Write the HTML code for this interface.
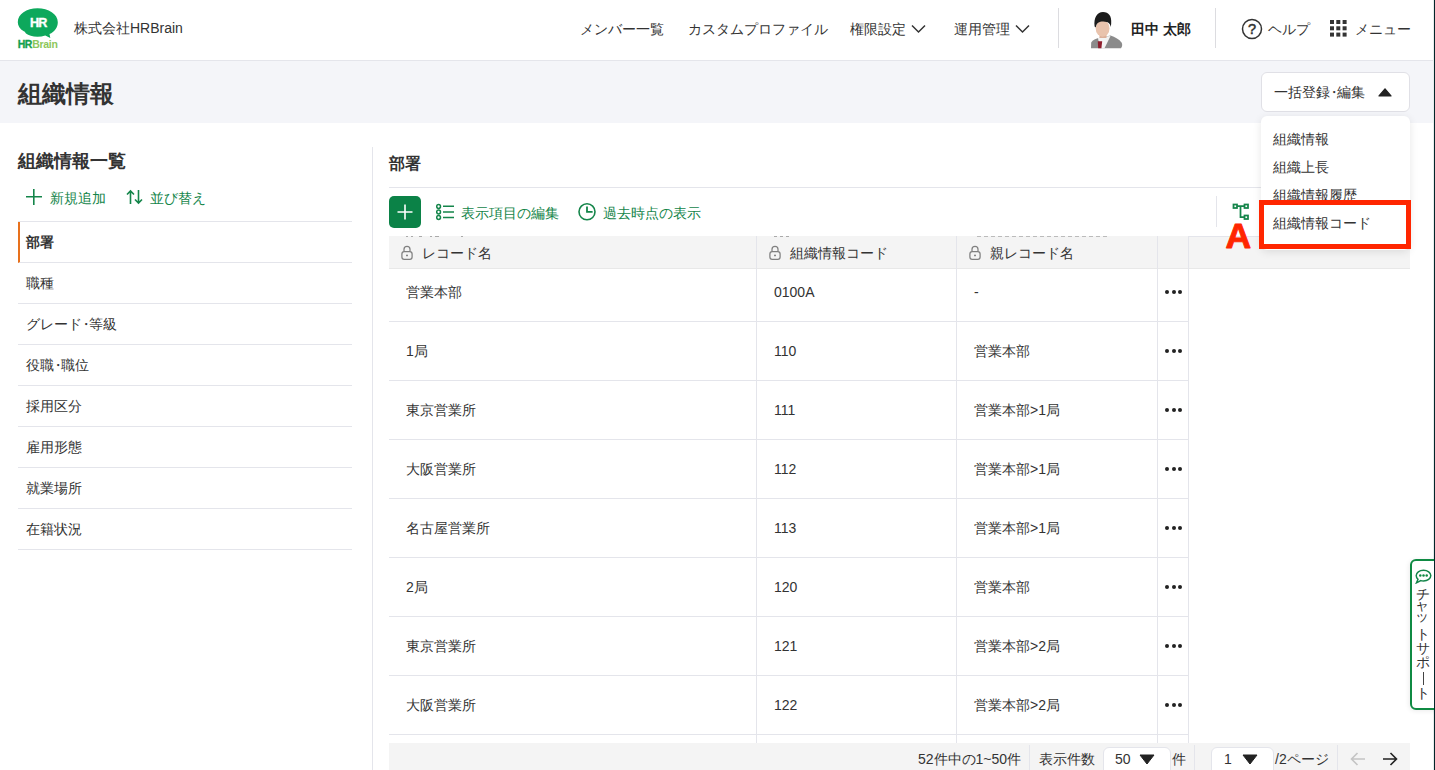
<!DOCTYPE html>
<html lang="ja">
<head>
<meta charset="utf-8">
<style>
*{box-sizing:border-box;margin:0;padding:0}
html,body{width:1435px;height:770px;overflow:hidden;background:#fff;font-family:"Liberation Sans",sans-serif;color:#333;font-size:14px}
.abs{position:absolute}
.t{position:absolute;white-space:nowrap;line-height:1}
#hdr{position:absolute;left:0;top:0;width:1435px;height:61px;background:#fff;border-bottom:1px solid #e4e5eb}
#band{position:absolute;left:0;top:61px;width:1435px;height:62px;background:#f4f5f9}
.vl{position:absolute;width:1px;background:#dcdce0}
.hl{position:absolute;height:1px;background:#e4e5eb}
.green{color:#14854a}
.side-item{position:absolute;left:18px;width:334px;height:41px;border-bottom:1px solid #e4e5eb}
.side-item span{position:absolute;left:8px;top:13px;line-height:14px;font-size:14px;color:#333}
.row{position:absolute;left:389px;width:799px;height:59px;border-bottom:1px solid #e4e5eb}
.cell{position:absolute;font-size:14px;line-height:14px;color:#333;white-space:nowrap}
.dots{position:absolute;left:1165px;width:17px;height:4px}
.dots i{position:absolute;top:0;width:4px;height:4px;border-radius:50%;background:#222}
</style>
</head>
<body>
<!-- header -->
<div id="hdr"></div>
<!-- logo -->
<svg class="abs" style="left:17px;top:7px" width="42" height="43" viewBox="0 0 42 43">
  <path d="M20.5 1.3 C31.5 1.3 40.8 7.2 40.8 15.2 C40.8 20.5 37.5 24.6 32.5 27.1 L33.3 31 L28.3 28.6 C25.8 29.4 23.2 29.8 20.5 29.8 C15.5 29.8 11.3 28.6 9 26.6 C8.2 25.2 7.8 24.8 6.8 24.3 C2.8 22 0.8 18.8 0.8 15.2 C0.8 7.2 9.5 1.3 20.5 1.3 Z" fill="#0da85c"/>
  <text x="21.3" y="20.4" text-anchor="middle" font-family="Liberation Sans" font-weight="bold" font-size="12.6" fill="#fff" stroke="#fff" stroke-width="0.35" letter-spacing="-0.9">HR</text>
  <text x="0.8" y="41" font-family="Liberation Sans" font-weight="bold" font-size="10.5" fill="#14a04e" stroke="#14a04e" stroke-width="0.3" letter-spacing="-0.6">HR</text>
  <text x="15.2" y="41" font-family="Liberation Sans" font-weight="bold" font-size="10.5" fill="#8cc75c" letter-spacing="-0.3">Brain</text>
</svg>
<div class="t" style="left:74px;top:21px;font-size:14px;color:#333">株式会社HRBrain</div>
<!-- nav -->
<div class="t" style="left:580px;top:22px;font-size:14px">メンバー一覧</div>
<div class="t" style="left:688px;top:22px;font-size:14px">カスタムプロファイル</div>
<div class="t" style="left:850px;top:22px;font-size:14px">権限設定</div>
<svg class="abs" style="left:911px;top:24px" width="15" height="10" viewBox="0 0 15 10"><path d="M1 1.5 L7.5 8 L14 1.5" fill="none" stroke="#333" stroke-width="1.5"/></svg>
<div class="t" style="left:954px;top:22px;font-size:14px">運用管理</div>
<svg class="abs" style="left:1015px;top:24px" width="15" height="10" viewBox="0 0 15 10"><path d="M1 1.5 L7.5 8 L14 1.5" fill="none" stroke="#333" stroke-width="1.5"/></svg>
<div class="vl" style="left:1058px;top:8px;height:40px"></div>
<!-- avatar -->
<svg class="abs" style="left:1090px;top:11px" width="34" height="38" viewBox="0 0 34 38">
  <path d="M1 37.2 L1.2 31.5 C2.5 29 6 27.8 9.5 26.8 L20.5 24.5 C25 26 29.5 28.5 31.5 31.5 C32.5 33 32.5 35.5 31 37.2 Z" fill="#8b8b8b"/>
  <path d="M8 27.2 L10 37.2 L14.5 37.2 L20.5 24.9 L16 25.6 L10.5 26 Z" fill="#f3f3f3"/>
  <path d="M7.8 30.2 L12.2 30.2 L11.4 37.2 L8.2 37.2 Z" fill="#8e1d2c"/>
  <rect x="9.5" y="22" width="7" height="5" fill="#dcb09a"/>
  <ellipse cx="12.6" cy="17.4" rx="6.9" ry="8.3" fill="#e9c3ad"/>
  <path d="M4.6 15.5 C3.5 6.5 7.2 1 13 1 C18.8 1 21.8 5 21.2 12.5 L20.8 16 C20 12.5 18.5 10.8 13.2 10.6 C8.8 10.6 6.6 12 5.8 16.5 Z" fill="#1c1c1c"/>
</svg>
<div class="t" style="left:1131px;top:22px;font-size:14px;font-weight:bold;color:#222">田中 太郎</div>
<div class="vl" style="left:1215px;top:8px;height:40px"></div>
<svg class="abs" style="left:1241px;top:18px" width="22" height="22" viewBox="0 0 22 22"><circle cx="11" cy="11" r="9.5" fill="none" stroke="#333" stroke-width="1.5"/><text x="11" y="16.2" text-anchor="middle" font-family="Liberation Sans" font-size="14.5" fill="#333" stroke="#333" stroke-width="0.5">?</text></svg>
<div class="t" style="left:1268px;top:22px;font-size:14px">ヘルプ</div>
<svg class="abs" style="left:1330px;top:20px" width="17" height="17" viewBox="0 0 17 17" fill="#333">
  <rect x="0" y="0" width="4" height="4"/><rect x="6.3" y="0" width="4" height="4"/><rect x="12.6" y="0" width="4" height="4"/>
  <rect x="0" y="6.3" width="4" height="4"/><rect x="6.3" y="6.3" width="4" height="4"/><rect x="12.6" y="6.3" width="4" height="4"/>
  <rect x="0" y="12.6" width="4" height="4"/><rect x="6.3" y="12.6" width="4" height="4"/><rect x="12.6" y="12.6" width="4" height="4"/>
</svg>
<div class="t" style="left:1355px;top:22px;font-size:14px">メニュー</div>

<div id="band"></div>
<div class="t" style="left:18px;top:82px;font-size:24px;font-weight:bold;color:#333">組織情報</div>
<div class="abs" style="left:1261px;top:72px;width:149px;height:40px;background:#fff;border:1px solid #e0e0e6;border-radius:6px"></div>
<div class="t" style="left:1274px;top:85px;font-size:14px">一括登録<span style="margin:0 -3.5px">・</span>編集</div>
<svg class="abs" style="left:1377px;top:87px" width="16" height="10" viewBox="0 0 16 10"><path d="M2 9 L8 1.8 L14 9 Z" fill="#222" stroke="#222" stroke-width="1.2" stroke-linejoin="round"/></svg>

<!-- sidebar -->
<div class="t" style="left:18px;top:152px;font-size:18px;font-weight:bold;color:#333">組織情報一覧</div>
<svg class="abs" style="left:26px;top:189px" width="16" height="16" viewBox="0 0 16 16"><path d="M7.8 0 V16 M0 7.8 H16" stroke="#14854a" stroke-width="1.6"/></svg>
<div class="t green" style="left:50px;top:191px;font-size:14px">新規追加</div>
<svg class="abs" style="left:126px;top:189px" width="17" height="16" viewBox="0 0 17 16"><path d="M4.5 15 V2 M1 5.5 L4.5 2 L8 5.5 M12.5 1 V14 M9 10.5 L12.5 14 L16 10.5" fill="none" stroke="#14854a" stroke-width="1.6"/></svg>
<div class="t green" style="left:150px;top:191px;font-size:14px">並び替え</div>
<div class="hl" style="left:18px;top:221px;width:334px"></div>
<div class="side-item" style="top:222px;border-left:2px solid #e8711d"><span style="left:6px;font-weight:bold">部署</span></div>
<div class="side-item" style="top:263px"><span>職種</span></div>
<div class="side-item" style="top:304px"><span>グレード<span style="position:static;margin:0 -3.5px">・</span>等級</span></div>
<div class="side-item" style="top:345px"><span>役職<span style="position:static;margin:0 -3.5px">・</span>職位</span></div>
<div class="side-item" style="top:386px"><span>採用区分</span></div>
<div class="side-item" style="top:427px"><span>雇用形態</span></div>
<div class="side-item" style="top:468px"><span>就業場所</span></div>
<div class="side-item" style="top:509px"><span>在籍状況</span></div>
<div class="vl" style="left:372px;top:147px;height:623px;background:#e4e5eb"></div>
<!-- main -->
<div class="t" style="left:389px;top:156px;font-size:16px;font-weight:bold;color:#333">部署</div>
<div class="hl" style="left:389px;top:187px;width:1021px"></div>
<div class="abs" style="left:389px;top:196px;width:32px;height:32px;background:#0b8247;border-radius:5px"></div>
<svg class="abs" style="left:397px;top:204px" width="16" height="16" viewBox="0 0 16 16"><path d="M8 0.5 V15.5 M0.5 8 H15.5" stroke="#fff" stroke-width="1.6"/></svg>
<svg class="abs" style="left:436px;top:203px" width="20" height="18" viewBox="0 0 20 18"><g fill="none" stroke="#14854a" stroke-width="1.5"><circle cx="2.6" cy="3.5" r="1.9"/><circle cx="2.6" cy="9" r="1.9"/><circle cx="2.6" cy="14.5" r="1.9"/><path d="M7 3.3 H18 M7 9 H18 M7 14.5 H18"/></g></svg>
<div class="t green" style="left:461px;top:206px;font-size:14px">表示項目の編集</div>
<svg class="abs" style="left:578px;top:203px" width="19" height="19" viewBox="0 0 19 19"><g fill="none" stroke="#14854a"><circle cx="9" cy="8.8" r="8" stroke-width="1.6"/><path d="M9 3.4 V8.8 H14.6" stroke-width="1.8"/></g></svg>
<div class="t green" style="left:603px;top:206px;font-size:14px">過去時点の表示</div>
<div class="vl" style="left:1216px;top:196px;height:31px;background:#e4e5eb"></div>
<svg class="abs" style="left:1232px;top:203px" width="18" height="18" viewBox="0 0 18 18"><g fill="none" stroke="#14854a" stroke-width="1.75"><rect x="1.5" y="1.5" width="3.5" height="3.5"/><rect x="12.5" y="1.5" width="3.5" height="3.5"/><rect x="12.5" y="12.5" width="3.5" height="3.5"/><path d="M5 3.2 H12.5 M8.5 3.2 V14.2 H12.5"/></g></svg>
<div class="abs" style="left:389px;top:236px;width:1021px;height:33px;background:#f4f4f4;border-bottom:1px solid #e8e8e8"></div>
<div class="vl" style="left:1188px;top:236px;height:507px;background:#e4e5eb"></div>
<div class="hl" style="left:1188px;top:236px;width:222px"></div>
<svg class="abs" style="left:401px;top:245px" width="13" height="15" viewBox="0 0 13 15"><g fill="none" stroke="#808080" stroke-width="1.25"><path d="M3 6.6 V4.3 A3 3 0 0 1 9 4.3 V6.6"/><rect x="0.9" y="6.6" width="10.2" height="7.7" rx="2.3"/></g><circle cx="6" cy="10.4" r="0.95" fill="#777"/></svg>
<div class="t" style="left:422px;top:246px;font-size:14px">レコード名</div>
<svg class="abs" style="left:769px;top:245px" width="13" height="15" viewBox="0 0 13 15"><g fill="none" stroke="#808080" stroke-width="1.25"><path d="M3 6.6 V4.3 A3 3 0 0 1 9 4.3 V6.6"/><rect x="0.9" y="6.6" width="10.2" height="7.7" rx="2.3"/></g><circle cx="6" cy="10.4" r="0.95" fill="#777"/></svg>
<div class="t" style="left:790px;top:246px;font-size:14px">組織情報コード</div>
<svg class="abs" style="left:969px;top:245px" width="13" height="15" viewBox="0 0 13 15"><g fill="none" stroke="#808080" stroke-width="1.25"><path d="M3 6.6 V4.3 A3 3 0 0 1 9 4.3 V6.6"/><rect x="0.9" y="6.6" width="10.2" height="7.7" rx="2.3"/></g><circle cx="6" cy="10.4" r="0.95" fill="#777"/></svg>
<div class="t" style="left:990px;top:246px;font-size:14px">親レコード名</div>
<div class="vl" style="left:756px;top:236px;height:507px;background:#e4e5eb"></div>
<div class="vl" style="left:956px;top:236px;height:507px;background:#e4e5eb"></div>
<div class="vl" style="left:1157px;top:236px;height:507px;background:#e4e5eb"></div>
<div class="hl" style="left:389px;top:321px;width:799px"></div>
<div class="cell" style="left:406px;top:285px">営業本部</div>
<div class="cell" style="left:774px;top:285px">0100A</div>
<div class="cell" style="left:974px;top:285px">-</div>
<div class="dots" style="top:290px"><i style="left:0"></i><i style="left:6.5px"></i><i style="left:13px"></i></div>
<div class="hl" style="left:389px;top:380px;width:799px"></div>
<div class="cell" style="left:406px;top:344px">1局</div>
<div class="cell" style="left:774px;top:344px">110</div>
<div class="cell" style="left:974px;top:344px">営業本部</div>
<div class="dots" style="top:349px"><i style="left:0"></i><i style="left:6.5px"></i><i style="left:13px"></i></div>
<div class="hl" style="left:389px;top:439px;width:799px"></div>
<div class="cell" style="left:406px;top:403px">東京営業所</div>
<div class="cell" style="left:774px;top:403px">111</div>
<div class="cell" style="left:974px;top:403px">営業本部>1局</div>
<div class="dots" style="top:408px"><i style="left:0"></i><i style="left:6.5px"></i><i style="left:13px"></i></div>
<div class="hl" style="left:389px;top:498px;width:799px"></div>
<div class="cell" style="left:406px;top:462px">大阪営業所</div>
<div class="cell" style="left:774px;top:462px">112</div>
<div class="cell" style="left:974px;top:462px">営業本部>1局</div>
<div class="dots" style="top:467px"><i style="left:0"></i><i style="left:6.5px"></i><i style="left:13px"></i></div>
<div class="hl" style="left:389px;top:557px;width:799px"></div>
<div class="cell" style="left:406px;top:521px">名古屋営業所</div>
<div class="cell" style="left:774px;top:521px">113</div>
<div class="cell" style="left:974px;top:521px">営業本部>1局</div>
<div class="dots" style="top:526px"><i style="left:0"></i><i style="left:6.5px"></i><i style="left:13px"></i></div>
<div class="hl" style="left:389px;top:616px;width:799px"></div>
<div class="cell" style="left:406px;top:580px">2局</div>
<div class="cell" style="left:774px;top:580px">120</div>
<div class="cell" style="left:974px;top:580px">営業本部</div>
<div class="dots" style="top:585px"><i style="left:0"></i><i style="left:6.5px"></i><i style="left:13px"></i></div>
<div class="hl" style="left:389px;top:675px;width:799px"></div>
<div class="cell" style="left:406px;top:639px">東京営業所</div>
<div class="cell" style="left:774px;top:639px">121</div>
<div class="cell" style="left:974px;top:639px">営業本部>2局</div>
<div class="dots" style="top:644px"><i style="left:0"></i><i style="left:6.5px"></i><i style="left:13px"></i></div>
<div class="hl" style="left:389px;top:734px;width:799px"></div>
<div class="cell" style="left:406px;top:698px">大阪営業所</div>
<div class="cell" style="left:774px;top:698px">122</div>
<div class="cell" style="left:974px;top:698px">営業本部>2局</div>
<div class="dots" style="top:703px"><i style="left:0"></i><i style="left:6.5px"></i><i style="left:13px"></i></div>
<div class="abs" style="left:389px;top:743px;width:1021px;height:27px;background:#f4f4f4"></div>
<div class="t" style="left:918px;top:752px;font-size:14px">52件中の1~50件</div>
<div class="vl" style="left:1029px;top:745px;height:25px;background:#e4e5eb"></div>
<div class="t" style="left:1039px;top:752px;font-size:14px">表示件数</div>
<div class="abs" style="left:1103px;top:747px;width:68px;height:30px;background:#fff;border:1px solid #e4e5eb;border-radius:6px"></div>
<div class="t" style="left:1115px;top:752px;font-size:14px">50</div>
<svg class="abs" style="left:1139px;top:754px" width="16" height="11" viewBox="0 0 16 11"><path d="M1 1 L15 1 L8 10 Z" fill="#222" stroke="#222" stroke-linejoin="round"/></svg>
<div class="t" style="left:1172px;top:752px;font-size:14px">件</div>
<div class="vl" style="left:1194px;top:745px;height:25px;background:#e4e5eb"></div>
<div class="abs" style="left:1211px;top:747px;width:63px;height:30px;background:#fff;border:1px solid #e4e5eb;border-radius:6px"></div>
<div class="t" style="left:1224px;top:752px;font-size:14px">1</div>
<svg class="abs" style="left:1242px;top:754px" width="16" height="11" viewBox="0 0 16 11"><path d="M1 1 L15 1 L8 10 Z" fill="#222" stroke="#222" stroke-linejoin="round"/></svg>
<div class="t" style="left:1275px;top:752px;font-size:14px">/2ページ</div>
<div class="vl" style="left:1337px;top:745px;height:25px;background:#e4e5eb"></div>
<svg class="abs" style="left:1350px;top:752px" width="16" height="14" viewBox="0 0 16 14"><path d="M15 7 H1.5 M7.5 1 L1.5 7 L7.5 13" fill="none" stroke="#c4c4c4" stroke-width="1.6"/></svg>
<svg class="abs" style="left:1382px;top:752px" width="16" height="14" viewBox="0 0 16 14"><path d="M1 7 H14.5 M8.5 1 L14.5 7 L8.5 13" fill="none" stroke="#222" stroke-width="1.6"/></svg>
<!-- scrolled fragments -->
<div class="abs" style="left:406px;top:236px;width:2px;height:1px;background:#aaa"></div>
<div class="abs" style="left:411px;top:236px;width:2px;height:1px;background:#aaa"></div>
<div class="abs" style="left:419px;top:236px;width:3px;height:1px;background:#aaa"></div>
<div class="abs" style="left:430px;top:236px;width:2px;height:1px;background:#aaa"></div>
<div class="abs" style="left:435px;top:236px;width:4px;height:1px;background:#aaa"></div>
<div class="abs" style="left:461px;top:236px;width:2px;height:1px;background:#aaa"></div>
<div class="abs" style="left:774px;top:236px;width:3px;height:1px;background:#aaa"></div>
<div class="abs" style="left:780px;top:236px;width:3px;height:1px;background:#aaa"></div>
<div class="abs" style="left:786px;top:236px;width:3px;height:1px;background:#aaa"></div>
<div class="abs" style="left:977px;top:236px;width:4px;height:1px;background:#bbb"></div>
<div class="abs" style="left:984px;top:236px;width:4px;height:1px;background:#bbb"></div>
<div class="abs" style="left:991px;top:236px;width:4px;height:1px;background:#bbb"></div>
<div class="abs" style="left:998px;top:236px;width:4px;height:1px;background:#bbb"></div>
<div class="abs" style="left:1005px;top:236px;width:4px;height:1px;background:#bbb"></div>
<div class="abs" style="left:1012px;top:236px;width:4px;height:1px;background:#bbb"></div>
<div class="abs" style="left:1019px;top:236px;width:4px;height:1px;background:#bbb"></div>
<div class="abs" style="left:1026px;top:236px;width:4px;height:1px;background:#bbb"></div>
<div class="abs" style="left:1033px;top:236px;width:4px;height:1px;background:#bbb"></div>
<div class="abs" style="left:1040px;top:236px;width:4px;height:1px;background:#bbb"></div>
<div class="abs" style="left:1047px;top:236px;width:4px;height:1px;background:#bbb"></div>
<div class="abs" style="left:1054px;top:236px;width:4px;height:1px;background:#bbb"></div>
<div class="abs" style="left:1061px;top:236px;width:4px;height:1px;background:#bbb"></div>
<div class="abs" style="left:1068px;top:236px;width:4px;height:1px;background:#bbb"></div>
<div class="abs" style="left:1075px;top:236px;width:4px;height:1px;background:#bbb"></div>
<div class="abs" style="left:1082px;top:236px;width:4px;height:1px;background:#bbb"></div>
<div class="abs" style="left:1089px;top:236px;width:4px;height:1px;background:#bbb"></div>
<div class="abs" style="left:1096px;top:236px;width:4px;height:1px;background:#bbb"></div>
<div class="abs" style="left:1103px;top:236px;width:4px;height:1px;background:#bbb"></div>
<!-- dropdown -->
<div class="abs" style="left:1261px;top:116px;width:149px;height:134px;background:#fff;border-radius:6px;box-shadow:0 2px 8px rgba(0,0,0,0.10)"></div>
<div class="t" style="left:1273px;top:132px;font-size:14px">組織情報</div>
<div class="t" style="left:1273px;top:160px;font-size:14px">組織上長</div>
<div class="t" style="left:1273px;top:188px;font-size:14px">組織情報履歴</div>
<div class="t" style="left:1273px;top:216px;font-size:14px">組織情報コード</div>
<div class="abs" style="left:1259px;top:200px;width:152px;height:49px;border:5px solid #ff2600"></div>
<svg class="abs" style="left:1220px;top:214px" width="40" height="40" viewBox="0 0 40 40"><text x="5.5" y="33.5" font-family="Liberation Sans" font-weight="bold" font-size="35.5" fill="#ff2600" stroke="#ff2600" stroke-width="0.9" stroke-linejoin="round">A</text></svg>
<div class="abs" style="left:1433px;top:0;width:1px;height:770px;background:#e6ecec"></div>
<div class="abs" style="left:1410px;top:559px;width:30px;height:151px;background:#fff;border:2px solid #0f8a43;border-radius:6px 0 0 6px;box-shadow:-1px 1px 5px rgba(0,0,0,0.08)"></div>
<svg class="abs" style="left:1415px;top:569px" width="17" height="15" viewBox="0 0 17 15"><path d="M8.5 1.2 C12.6 1.2 15.8 3.6 15.8 6.6 C15.8 9.6 12.6 12 8.5 12 C7.5 12 6.6 11.9 5.8 11.6 L1.5 13.8 L3 10.3 C1.9 9.4 1.2 8.1 1.2 6.6 C1.2 3.6 4.4 1.2 8.5 1.2 Z" fill="none" stroke="#14854a" stroke-width="1.5"/><circle cx="5.3" cy="6.6" r="1.25" fill="#0f8a43"/><circle cx="8.5" cy="6.6" r="1.25" fill="#0f8a43"/><circle cx="11.7" cy="6.6" r="1.25" fill="#0f8a43"/></svg>
<div class="abs" style="left:1415px;top:587px;width:16px;font-size:14px;line-height:14px;text-align:center;color:#333">チ</div>
<div class="abs" style="left:1415px;top:594px;width:14px;height:14px;font-size:14px;line-height:14px;writing-mode:vertical-rl;color:#333">ャ</div>
<div class="abs" style="left:1415px;top:606px;width:14px;height:14px;font-size:14px;line-height:14px;writing-mode:vertical-rl;color:#333">ッ</div>
<div class="abs" style="left:1415px;top:627px;width:16px;font-size:14px;line-height:14px;text-align:center;color:#333">ト</div>
<div class="abs" style="left:1415px;top:641px;width:16px;font-size:14px;line-height:14px;text-align:center;color:#333">サ</div>
<div class="abs" style="left:1415px;top:655px;width:16px;font-size:14px;line-height:14px;text-align:center;color:#333">ポ</div>
<div class="abs" style="left:1415px;top:686px;width:16px;font-size:14px;line-height:14px;text-align:center;color:#333">ト</div>
<div class="abs" style="left:1422.5px;top:672px;width:1.3px;height:13px;background:#444"></div>
<div class="abs" style="left:1434px;top:0;width:1px;height:770px;background:#03252a"></div>
</body>
</html>
